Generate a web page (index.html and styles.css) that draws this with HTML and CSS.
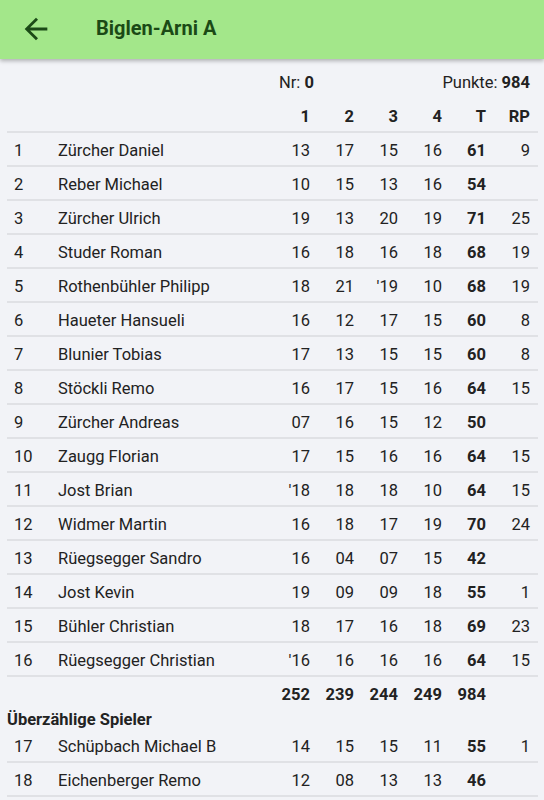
FILE: index.html
```html
<!DOCTYPE html>
<html lang="de">
<head>
<meta charset="utf-8">
<title>Biglen-Arni A</title>
<link rel="stylesheet" href="styles.css">
</head>
<body>
<header class="appbar">
  <svg class="back" viewBox="0 0 24 24" width="34" height="34"><path d="M20 11H7.83l5.59-5.59L12 4l-8 8 8 8 1.41-1.41L7.83 13H20v-2z" fill="currentColor"/></svg>
  <h1 class="title">Biglen-Arni A</h1>
</header>
<main class="content">
  <div class="row info">
    <div class="infobar"><span>Nr: <b>0</b></span><span>Punkte: <b>984</b></span></div>
  </div>
  <div class="row head">
    <span></span><span></span><span class="n">1</span><span class="n">2</span><span class="n">3</span><span class="n">4</span><span class="n">T</span><span class="n">RP</span>
  </div>
  <div class="row line"><span class="nr">1</span><span>Zürcher Daniel</span><span class="n">13</span><span class="n">17</span><span class="n">15</span><span class="n">16</span><span class="n b">61</span><span class="n">9</span></div>
  <div class="row line"><span class="nr">2</span><span>Reber Michael</span><span class="n">10</span><span class="n">15</span><span class="n">13</span><span class="n">16</span><span class="n b">54</span><span class="n"></span></div>
  <div class="row line"><span class="nr">3</span><span>Zürcher Ulrich</span><span class="n">19</span><span class="n">13</span><span class="n">20</span><span class="n">19</span><span class="n b">71</span><span class="n">25</span></div>
  <div class="row line"><span class="nr">4</span><span>Studer Roman</span><span class="n">16</span><span class="n">18</span><span class="n">16</span><span class="n">18</span><span class="n b">68</span><span class="n">19</span></div>
  <div class="row line"><span class="nr">5</span><span>Rothenbühler Philipp</span><span class="n">18</span><span class="n">21</span><span class="n">'19</span><span class="n">10</span><span class="n b">68</span><span class="n">19</span></div>
  <div class="row line"><span class="nr">6</span><span>Haueter Hansueli</span><span class="n">16</span><span class="n">12</span><span class="n">17</span><span class="n">15</span><span class="n b">60</span><span class="n">8</span></div>
  <div class="row line"><span class="nr">7</span><span>Blunier Tobias</span><span class="n">17</span><span class="n">13</span><span class="n">15</span><span class="n">15</span><span class="n b">60</span><span class="n">8</span></div>
  <div class="row line"><span class="nr">8</span><span>Stöckli Remo</span><span class="n">16</span><span class="n">17</span><span class="n">15</span><span class="n">16</span><span class="n b">64</span><span class="n">15</span></div>
  <div class="row line"><span class="nr">9</span><span>Zürcher Andreas</span><span class="n">07</span><span class="n">16</span><span class="n">15</span><span class="n">12</span><span class="n b">50</span><span class="n"></span></div>
  <div class="row line"><span class="nr">10</span><span>Zaugg Florian</span><span class="n">17</span><span class="n">15</span><span class="n">16</span><span class="n">16</span><span class="n b">64</span><span class="n">15</span></div>
  <div class="row line"><span class="nr">11</span><span>Jost Brian</span><span class="n">'18</span><span class="n">18</span><span class="n">18</span><span class="n">10</span><span class="n b">64</span><span class="n">15</span></div>
  <div class="row line"><span class="nr">12</span><span>Widmer Martin</span><span class="n">16</span><span class="n">18</span><span class="n">17</span><span class="n">19</span><span class="n b">70</span><span class="n">24</span></div>
  <div class="row line"><span class="nr">13</span><span>Rüegsegger Sandro</span><span class="n">16</span><span class="n">04</span><span class="n">07</span><span class="n">15</span><span class="n b">42</span><span class="n"></span></div>
  <div class="row line"><span class="nr">14</span><span>Jost Kevin</span><span class="n">19</span><span class="n">09</span><span class="n">09</span><span class="n">18</span><span class="n b">55</span><span class="n">1</span></div>
  <div class="row line"><span class="nr">15</span><span>Bühler Christian</span><span class="n">18</span><span class="n">17</span><span class="n">16</span><span class="n">18</span><span class="n b">69</span><span class="n">23</span></div>
  <div class="row line"><span class="nr">16</span><span>Rüegsegger Christian</span><span class="n">'16</span><span class="n">16</span><span class="n">16</span><span class="n">16</span><span class="n b">64</span><span class="n">15</span></div>
  <div class="row total"><span></span><span></span><span class="n b">252</span><span class="n b">239</span><span class="n b">244</span><span class="n b">249</span><span class="n b">984</span><span class="n"></span></div>
  <h2 class="section">Überzählige Spieler</h2>
  <div class="row line"><span class="nr">17</span><span>Schüpbach Michael B</span><span class="n">14</span><span class="n">15</span><span class="n">15</span><span class="n">11</span><span class="n b">55</span><span class="n">1</span></div>
  <div class="row line"><span class="nr">18</span><span>Eichenberger Remo</span><span class="n">12</span><span class="n">08</span><span class="n">13</span><span class="n">13</span><span class="n b">46</span><span class="n"></span></div>
</main>
</body>
</html>
```
FILE: styles.css
```css
* { box-sizing: border-box; }
html, body { margin: 0; padding: 0; }
body {
  background: #f2f3f7;
  font-family: Roboto, "Liberation Sans", sans-serif;
  color: #222;
  font-size: 16.5px;
  width: 544px;
  height: 800px;
  overflow: hidden;
}
.appbar {
  height: 59px;
  background: #a3e78a;
  display: flex;
  align-items: center;
  padding-left: 19px;
  box-shadow: 0 2px 4px rgba(0, 0, 0, 0.28);
  position: relative;
  z-index: 1;
  color: #1b4a16;
}
.back { display: block; margin-top: -2px; }
.title {
  margin: 0 0 0 43px;
  font-size: 20px;
  font-weight: 700;
  color: #1b4a16;
  margin-top: -3px;
}
.content { padding: 6px 6px 0 7px; }
.row {
  display: grid;
  grid-template-columns: 51px 1fr repeat(6, 44px);
  align-items: center;
  height: 34px;
  padding-right: 8px;
}
.row.line { border-bottom: 2px solid #e0e1e5; padding-top: 2px; }
.head { border-bottom: 2px solid #e0e1e5; padding-top: 2px; font-weight: 700; }
.nr { padding-left: 7px; }
.n { text-align: right; }
.b { font-weight: 700; }
.info { display: flex; }
.infobar {
  margin-left: 259px;
  flex: 1;
  display: flex;
  justify-content: space-between;
  padding-left: 13px;
}
.section {
  margin: 0;
  font-size: 16.5px;
  font-weight: 700;
  height: 18px;
  line-height: 18px;
}
.total { height: 34px; }
```
